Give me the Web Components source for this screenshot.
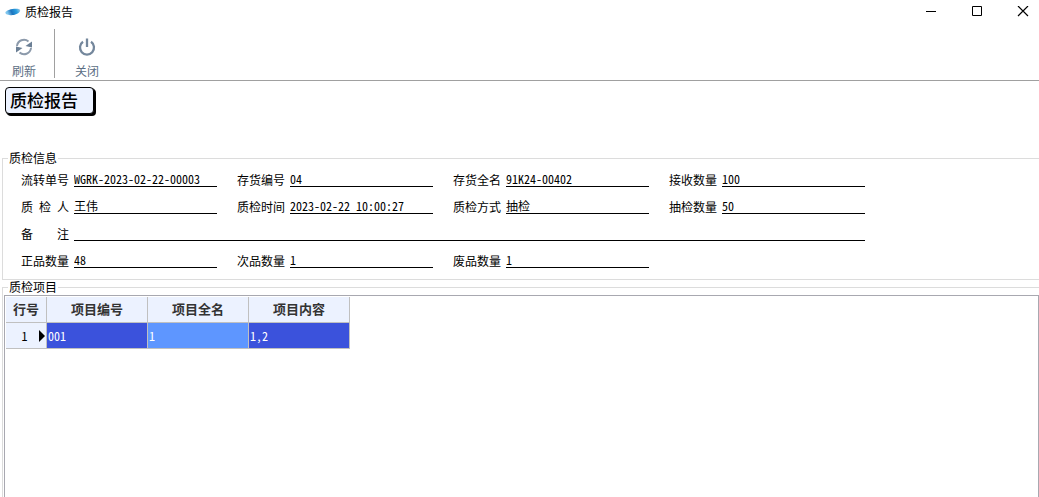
<!DOCTYPE html>
<html lang="zh-CN">
<head>
<meta charset="utf-8">
<title>质检报告</title>
<style>
html,body{margin:0;height:100%}
body{font:12px/16px "Noto Sans CJK SC",sans-serif;color:#000;background:#fff;overflow:hidden}
</style>
</head>
<body>
<report-window></report-window>
<script>
const define = (name, html, init) => customElements.define(name, class extends HTMLElement {
  constructor() {
    super();
    this.attachShadow({mode: 'open'}).innerHTML = html;
  }
  connectedCallback() { if (init) init(this, this.shadowRoot); }
});

define('title-bar', `
<style>
:host{display:flex;align-items:center;height:24px;padding-left:5px}
.logo{width:16px;height:16px;margin-right:4px}
h1{font:inherit;margin:0;flex:1}
nav{display:flex;padding-right:10px;gap:34px}
button{width:12px;height:24px;padding:0;border:0;background:none;display:grid;place-items:center}
button svg{display:block}
</style>
<svg class="logo" viewBox="0 0 16 16"><defs><linearGradient id="g" x2="1" y2="-.2"><stop offset="0" stop-color="#7fc6ee"/><stop offset=".3" stop-color="#1c74be"/><stop offset=".65" stop-color="#2a9fe0"/><stop offset="1" stop-color="#c3d3e2"/></linearGradient></defs><path fill="url(#g)" d="M.500 8C2 5.500 10 3.800 14.500 5.200C16.500 7 14 10 9 11C4 11.500 0 10.500 .500 8Z"/></svg>
<h1><slot></slot></h1>
<nav>
<button aria-label="最小化"><svg width="12" height="12"><path d="M1 5.500H11" stroke="#000"/></svg></button>
<button aria-label="最大化"><svg width="12" height="12"><path d="M1.500 .500H10.500V9.500H1.500Z" fill="none" stroke="#000"/></svg></button>
<button aria-label="关闭窗口"><svg width="12" height="12"><path d="M1 0L11 10M11 0L1 10" stroke="#000" stroke-width="1.200"/></svg></button>
</nav>
`);

define('tool-button', `
<style>
:host{display:block}
button{display:flex;flex-direction:column;align-items:center;gap:7px;width:36px;padding:0;border:0;background:none;font:inherit;color:#5b6e84}
::slotted(svg){display:block;width:18px;height:18px}
</style>
<button><slot name="icon"></slot><span><slot></slot></span></button>
`);

define('tool-bar', `
<style>
:host{display:flex;height:52px;padding:4px 0 0 6px;border-bottom:1px solid #a0a0a0;box-sizing:content-box}
::slotted(tool-button){margin-top:10px}
::slotted(hr){width:1px;height:49px;margin:1px 14px 0 12px;border:0;background:#a0a0a0}
</style>
<slot></slot>
`);

define('report-badge', `
<style>
:host{display:block;padding:6px 5px 36px}
h2{display:inline-block;box-sizing:border-box;height:27px;min-width:89px;margin:0;padding:0 4px;border:1px solid #000;border-radius:4px;background:#ecf2ff;box-shadow:1px 1px #000,2px 2px #000;font-size:17px;line-height:24px;font-weight:500}
</style>
<h2><slot></slot></h2>
`);

define('group-box', `
<style>
:host{display:block}
fieldset{box-sizing:border-box;height:100%;min-width:0;margin:0 0 0 2px;padding:0;border:1px solid #dcdcdc;border-right:0}
:host([open]) fieldset{border-bottom:0}
legend{margin-left:5px;padding:0 1px;line-height:16px}
</style>
<fieldset><legend></legend><slot></slot></fieldset>
`, (el, root) => { root.querySelector('legend').textContent = el.getAttribute('caption'); });

define('form-grid', `
<style>
:host{display:grid;grid-template-columns:repeat(4,196px);gap:7px 20px;padding:1px 0 11px 18px}
</style>
<slot></slot>
`);

define('form-field', `
<style>
:host{display:flex;align-items:flex-start;height:20px}
:host([wide]){grid-column:1/-1}
label{width:48px;margin-right:5px;padding-top:5px;text-align:justify;text-align-last:justify;white-space:nowrap;line-height:16px}
input{box-sizing:border-box;flex:1;min-width:0;height:20px;padding:3px 0 0;border:0;border-bottom:1px solid #000;border-radius:0;background:none;outline:0;color:inherit;font:inherit;font-feature-settings:"hwid"}
</style>
<label for="v"></label><input id="v" type="text" readonly>
`, (el, root) => {
  root.querySelector('label').textContent = el.getAttribute('label');
  root.querySelector('input').value = el.getAttribute('value') || '';
});

define('data-grid', `
<style>
:host{display:block;box-sizing:border-box;height:100%;margin-left:1px;padding:1px;border:1px solid #a8a8b0;border-bottom:0}
table{border-collapse:separate;border-spacing:0;table-layout:fixed;width:344px}
th,td{box-sizing:border-box;height:26px;padding:0 0 0 1px;border:solid #c0c0c0;border-width:0 1px 1px 0;line-height:16px;text-align:left}
col.no{width:41px}
thead th{padding:0 0 1px;background:#ecf2ff;color:#333;font-size:13px;text-align:center}
tbody th{background:#ecf2ff;font-weight:400;font-feature-settings:"hwid"}
tbody th div{display:grid;grid-template-columns:1fr 6px;align-items:center;text-align:center;padding:0 1px 0 3px}
tbody th svg{display:block}
td{background:#3b52dc;color:#fff;font-feature-settings:"hwid"}
td.current{background:#5e96ff}
</style>
<table>
<colgroup><col class="no"><col><col><col></colgroup>
<thead><tr><th>行号</th><th>项目编号</th><th>项目全名</th><th>项目内容</th></tr></thead>
<tbody><tr><th scope="row"><div><span>1</span><svg width="6" height="12"><path d="M0 0L6 6L0 12Z"/></svg></div></th><td>001</td><td class="current">1</td><td>1,2</td></tr></tbody>
</table>
`);

define('report-window', `
<style>
:host{display:flex;flex-direction:column;height:100vh}
.items{flex:1;min-height:0;margin-top:-1px}
</style>
<title-bar>质检报告</title-bar>
<tool-bar>
<tool-button><svg slot="icon" viewBox="0 0 18 18" fill="none" stroke="#8c9aab" stroke-width="2"><path d="M2 8A7 7 0 0 1 13.500 3.500M16 10A7 7 0 0 1 4.500 14.500"/><path fill="#6b7f95" stroke="none" d="M17 3.500V9.500L10.500 8ZM1 14.500V8.500L7.500 10Z"/></svg>刷新</tool-button>
<hr>
<tool-button><svg slot="icon" viewBox="0 0 18 18" fill="none" stroke="#74879c" stroke-width="2.300"><path d="M5 3.800A7 7 0 1 0 13 3.800M9 .500V9"/></svg>关闭</tool-button>
</tool-bar>
<report-badge>质检报告</report-badge>
<group-box caption="质检信息">
<form-grid>
<form-field label="流转单号" value="WGRK-2023-02-22-00003"></form-field>
<form-field label="存货编号" value="04"></form-field>
<form-field label="存货全名" value="91K24-00402"></form-field>
<form-field label="接收数量" value="100"></form-field>
<form-field label="质 检 人" value="王伟"></form-field>
<form-field label="质检时间" value="2023-02-22 10:00:27"></form-field>
<form-field label="质检方式" value="抽检"></form-field>
<form-field label="抽检数量" value="50"></form-field>
<form-field label="备 注" wide></form-field>
<form-field label="正品数量" value="48"></form-field>
<form-field label="次品数量" value="1"></form-field>
<form-field label="废品数量" value="1"></form-field>
</form-grid>
</group-box>
<group-box class="items" caption="质检项目" open><data-grid></data-grid></group-box>
`);
</script>
</body>
</html>
